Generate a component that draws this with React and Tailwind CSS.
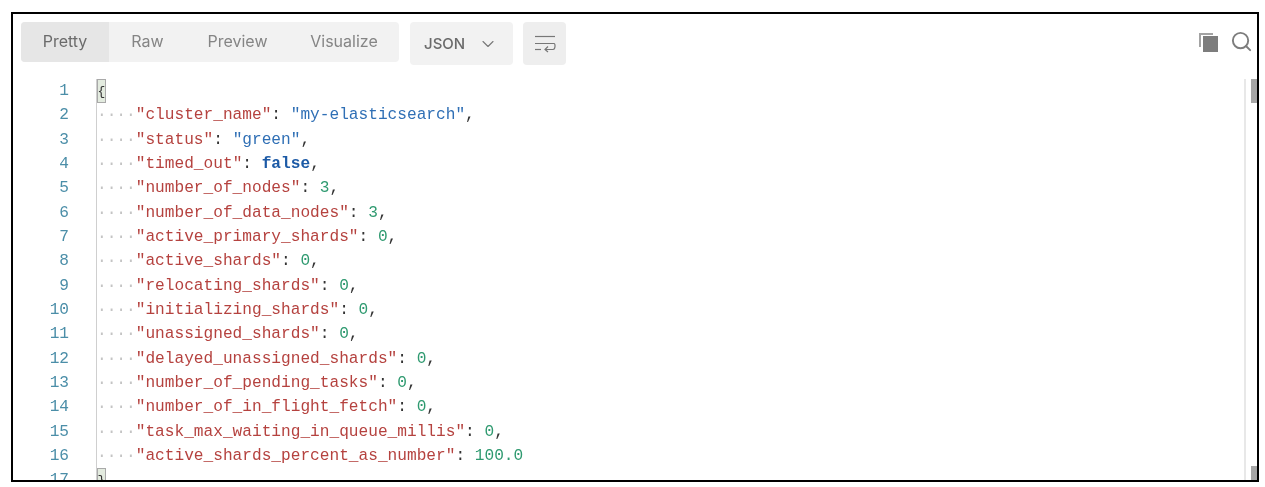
import React from "react";
import { ChevronDown, Search } from "lucide-react";

const tabs = [
  { label: "Pretty", width: "w-[88px]" },
  { label: "Raw", width: "w-[77px]" },
  { label: "Preview", width: "w-[103px]" },
  { label: "Visualize", width: "w-[110px]" },
];

const lines = [
  { key: "cluster_name", value: '"my-elasticsearch"', type: "string", comma: true },
  { key: "status", value: '"green"', type: "string", comma: true },
  { key: "timed_out", value: "false", type: "bool", comma: true },
  { key: "number_of_nodes", value: "3", type: "number", comma: true },
  { key: "number_of_data_nodes", value: "3", type: "number", comma: true },
  { key: "active_primary_shards", value: "0", type: "number", comma: true },
  { key: "active_shards", value: "0", type: "number", comma: true },
  { key: "relocating_shards", value: "0", type: "number", comma: true },
  { key: "initializing_shards", value: "0", type: "number", comma: true },
  { key: "unassigned_shards", value: "0", type: "number", comma: true },
  { key: "delayed_unassigned_shards", value: "0", type: "number", comma: true },
  { key: "number_of_pending_tasks", value: "0", type: "number", comma: true },
  { key: "number_of_in_flight_fetch", value: "0", type: "number", comma: true },
  { key: "task_max_waiting_in_queue_millis", value: "0", type: "number", comma: true },
  { key: "active_shards_percent_as_number", value: "100.0", type: "number", comma: false },
];

const valueClass = {
  string: "text-[#2f6fb5]",
  number: "text-[#2f9a70]",
  bool: "text-[#1c5aa6] font-bold",
};

const LineNumber = ({ n }) => (
  <div className="h-[24.33px] w-[67px] pr-[27px] text-right text-[#4b8ea8]">{n}</div>
);

const Bracket = ({ char }) => (
  <span className="inline-flex h-[24px] w-[9px] items-center justify-center overflow-hidden border border-[#a9a9a9] bg-[#e3ebdf] text-[13px] leading-none text-[#333]">
    {char}
  </span>
);

const App = () => {
  return (
    <div className="h-[487px] w-[1265px] overflow-hidden bg-white pl-[11px] pt-[12px] blur-[0.4px]">
      <div className="flex h-[470px] w-[1248px] flex-col overflow-hidden border-2 border-black bg-white">
        <div className="flex shrink-0 items-start pl-[8px] pr-[4px] pt-[8px]">
          <div className="flex h-[40px] w-[378px] items-center overflow-hidden rounded-[4px] bg-[#f2f2f2] font-['Inter',sans-serif] text-[16px] text-[#858585]">
            {tabs.map((tab, i) => (
              <div
                key={tab.label}
                className={`flex h-full items-center justify-center pb-[2px] ${tab.width} ${
                  i === 0 ? "bg-[#e6e6e6] text-[#6b6b6b]" : ""
                }`}
              >
                {tab.label}
              </div>
            ))}
          </div>
          <div className="ml-[11px] flex h-[43px] w-[103px] items-center rounded-[4px] bg-[#f2f2f2] pl-[14px] pt-[1px] font-['Inter',sans-serif] text-[15px] font-medium text-[#6b6b6b]">
            JSON
            <ChevronDown size={20} strokeWidth={1.3} className="ml-[13px] text-[#777777]" />
          </div>
          <div className="ml-[10px] flex h-[43px] w-[43px] items-center justify-center rounded-[4px] bg-[#eeeeee]">
            <svg width="22" height="20" viewBox="0 0 22 20" fill="none" stroke="#777777" strokeWidth="1.2">
              <path d="M1 2.5H21" />
              <path d="M1 9.5H20C21.5 9.5 21.5 15.5 19 15.5H11" />
              <path d="M14 12.5L11 15.5L14 18" />
              <path d="M1 15.5H7" />
            </svg>
          </div>
          <div className="ml-auto flex items-center gap-[11px] pt-[8px]">
            <svg width="20" height="20" viewBox="0 0 20 20" fill="#7d7d7d">
              <path d="M0 1H14V3H2V15H0Z" fill="#a3a3a3" />
              <rect x="4" y="4" width="15" height="16" />
            </svg>
            <Search size={23} strokeWidth={2} className="text-[#7d7d7d]" />
          </div>
        </div>

        <div className="flex min-h-0 flex-1 pt-[14px] font-['Liberation_Mono',monospace] text-[16.15px] leading-[24.33px]">
          <div className="shrink-0 pl-[16px]">
            <LineNumber n={1} />
            {lines.map((line, i) => (
              <LineNumber key={line.key} n={i + 2} />
            ))}
            <LineNumber n={17} />
          </div>
          <div className="min-w-0 flex-1 whitespace-pre border-l border-[#cfcfcf]">
            <div className="flex h-[24.33px] items-center">
              <Bracket char="{" />
            </div>
            {lines.map((line) => (
              <div key={line.key} className="h-[24.33px]">
                <span className="text-[#c4c4c4]">····</span>
                <span className="text-[#b5423f]">"{line.key}"</span>
                <span className="text-[#333333]">: </span>
                <span className={valueClass[line.type]}>{line.value}</span>
                {line.comma && <span className="text-[#333333]">,</span>}
              </div>
            ))}
            <div className="flex h-[24.33px] items-start">
              <Bracket char="}" />
            </div>
          </div>
          <div className="flex w-[13px] shrink-0 flex-col justify-between border-l-2 border-[#e8e8e8] pl-[5px]">
            <div className="h-[24px] w-[6px] bg-[#a6a6a6]" />
            <div className="h-[14px] w-[6px] bg-[#a6a6a6]" />
          </div>
        </div>
      </div>
    </div>
  );
};

export default App;
